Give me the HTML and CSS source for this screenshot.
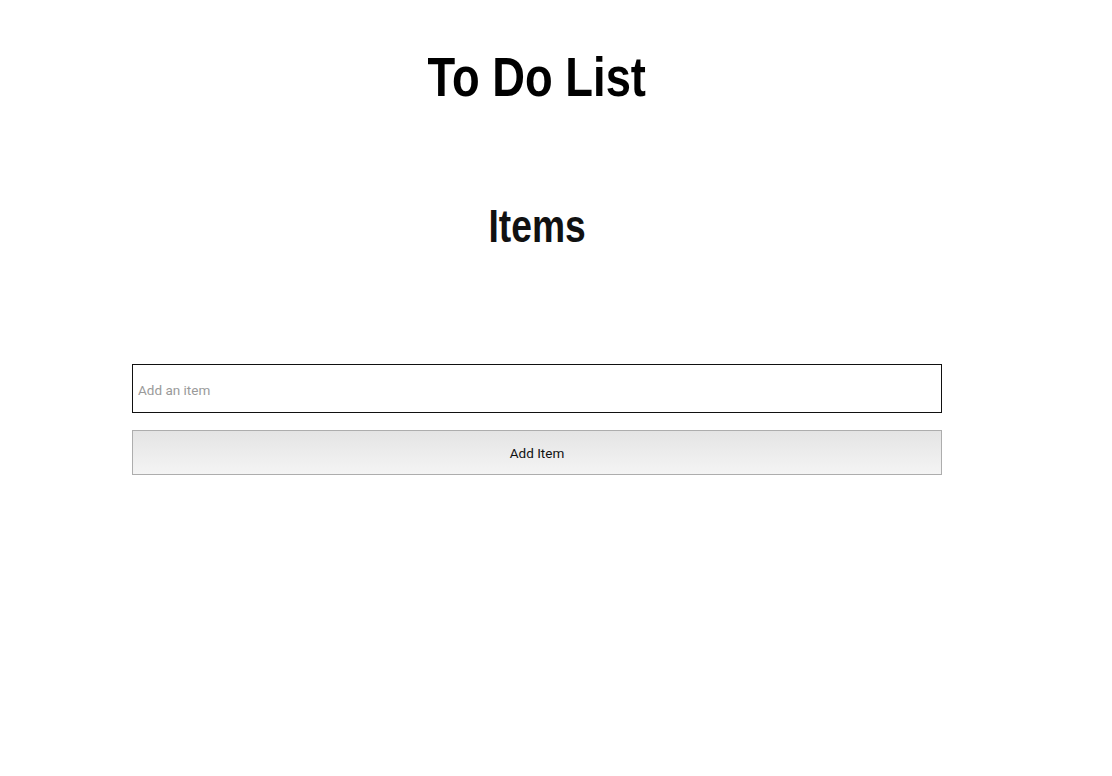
FILE: index.html
```html
<!DOCTYPE html>
<html lang="en">

<head>
  <meta charset="UTF-8">
  <meta name="viewport" content="width=device-width, initial-scale=1.0">
  <title>To Do List</title>
  <link rel="stylesheet" href="styles.css">
</head>

<body>
  <div class="page">
    <h1><span>To Do List</span></h1>
    <h2><span>Items</span></h2>
    <ul id="itemList"></ul>
    <form id="itemForm">
      <input type="text" id="newItem" placeholder="Add an item">
      <button class="btn" type="submit">Add Item</button>
    </form>
  </div>
</body>

</html>
```

FILE: styles.css
```css
* {
	margin: 0;
	padding: 0;
	box-sizing: border-box;
}

body {
	background: #fff;
	color: #000;
	font-family: "Liberation Sans", Arial, sans-serif;
}

.page {
	width: 1074px;
	text-align: center;
}

/* narrow bold headings: squeeze the regular face */
h1 span,
h2 span {
	display: inline-block;
	transform: scaleX(0.81);
}

h1 {
	font-size: 56px;
	font-weight: bold;
	padding-top: 44px;
	line-height: 66px;
}

h2 {
	font-size: 46px;
	font-weight: bold;
	margin-top: 88px;
	line-height: 56px;
	color: #111;
}

#itemList {
	list-style: none;
	height: 110px;
}

#itemForm {
	width: 810px;
	margin: 0 auto;
	display: flex;
	flex-direction: column;
	gap: 17px;
}

#newItem {
	height: 49px;
	border: 1px solid #111;
	padding: 2px 5px 0;
	font-family: Roboto, "Liberation Sans", sans-serif;
	font-size: 13.5px;
	color: #333;
	outline: none;
}

#newItem::placeholder {
	color: #9a9a9a;
}

.btn {
	height: 45px;
	border: 1px solid #adadad;
	background: linear-gradient(#e4e4e4, #f4f4f4);
	font-family: Roboto, "Liberation Sans", sans-serif;
	font-size: 13.5px;
	color: #111;
}
```
